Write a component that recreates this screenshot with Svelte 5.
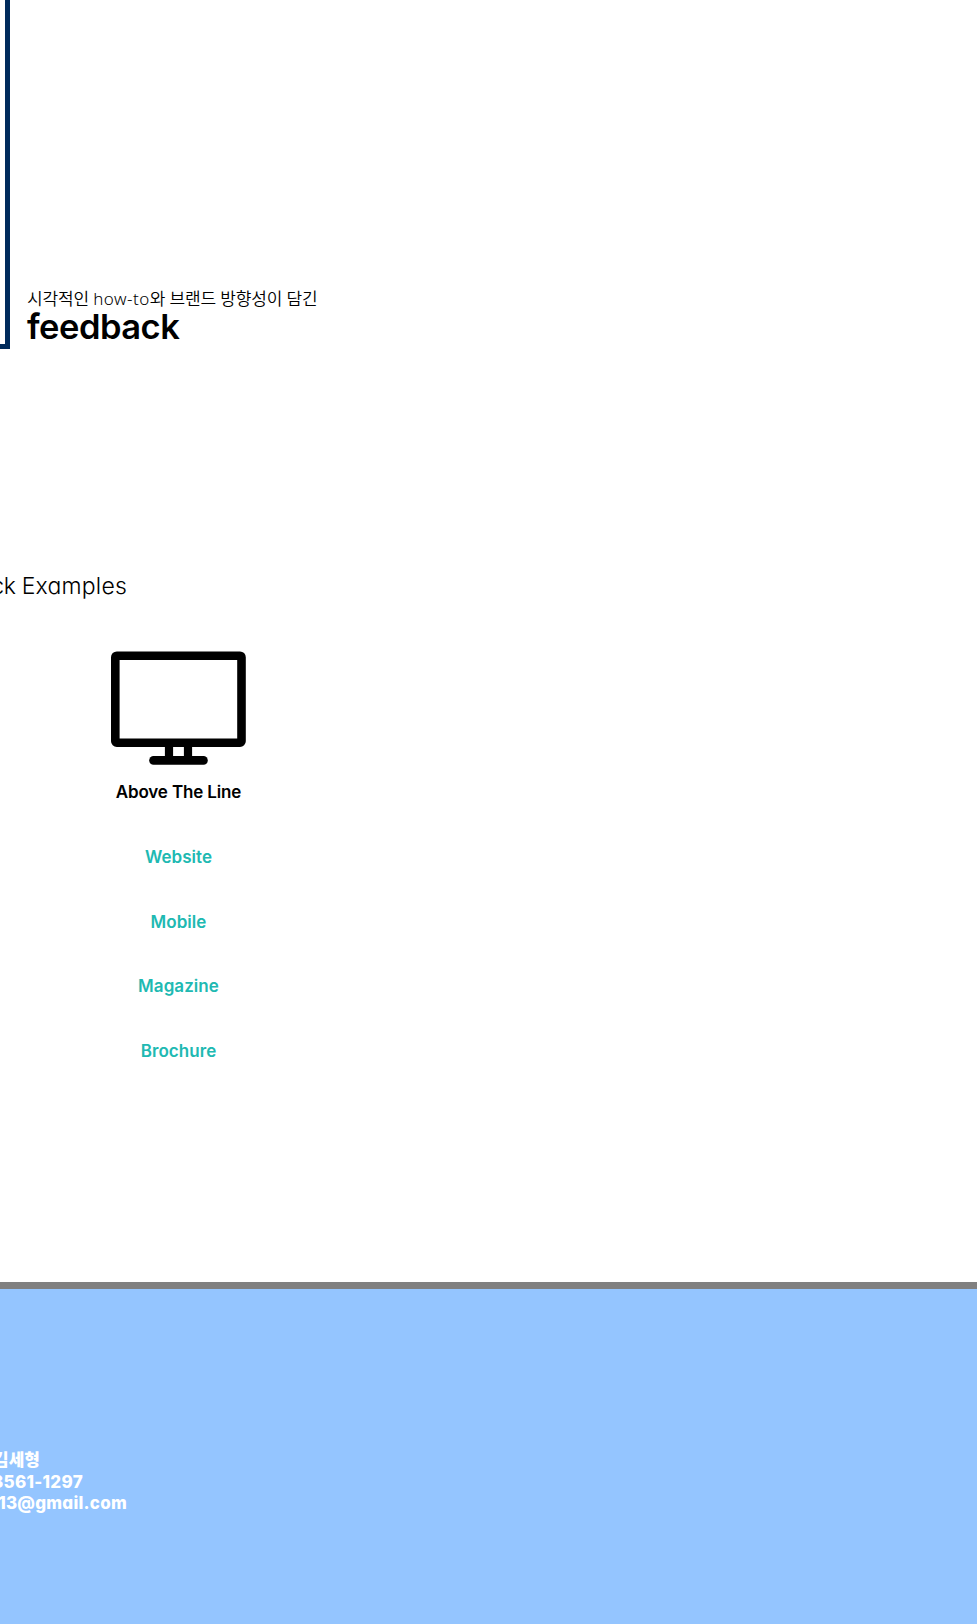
<script>
  const links = ['Website', 'Mobile', 'Magazine', 'Brochure'];
</script>

<main>
  <section class="intro">
    <div class="frame"></div>
    <div class="heading">
      <p>시각적인 <span class="latin">how-to</span>와 브랜드 방향성이 담긴</p>
      <h1>feedback</h1>
    </div>
  </section>

  <section class="examples">
    <h2><span class="clipped">ck</span><span>Examples</span></h2>
    <div class="column">
      <svg width="135" height="114" viewBox="0 0 135 114" aria-hidden="true">
        <rect x="4.3" y="4.7" width="126.2" height="87" rx="1.5" fill="none" stroke="#000" stroke-width="8.6" stroke-linejoin="round" />
        <path d="M58 92v18M77 92v18" stroke="#000" stroke-width="8.2" />
        <path d="M42.5 109.4h50" stroke="#000" stroke-width="8.6" stroke-linecap="round" />
      </svg>
      <h3><span>Above The Line</span></h3>
      <ul>
        {#each links as link}
          <li><span>{link}</span></li>
        {/each}
      </ul>
    </div>
  </section>

  <footer>
    <div class="name"><span>김세형</span></div>
    <div class="phone"><span>8561-1297</span></div>
    <div class="mail"><span>13@gmail.com</span></div>
  </footer>
</main>

<style>
  :global(body) { margin: 0; background: #fff; }
  main {
    width: 977px;
    height: 1624px;
    overflow: hidden;
    display: flex;
    flex-direction: column;
    color: #000;
    font-family: Inter, "Noto Sans CJK KR", sans-serif;
  }
  h1, h2, h3, p, ul { margin: 0; padding: 0; font-weight: inherit; }
  span { white-space: nowrap; }
  .intro { display: flex; height: 349px; flex: none; }
  .frame {
    box-sizing: border-box;
    width: 10px;
    border: solid #002b5c;
    border-width: 0 5px 5px 0;
  }
  .heading { padding: 287px 0 0 17px; white-space: nowrap; }
  .heading p {
    font: 350 17px/24px "Noto Sans", "Noto Sans CJK KR", sans-serif;
    letter-spacing: -0.16px;
  }
  .latin { letter-spacing: 0.5px; }
  h1 { font: 640 34.5px/36px Inter, sans-serif; letter-spacing: -0.5px; margin-top: -2px; }
  .examples { height: 933px; flex: none; }
  h2 {
    width: 127px;
    margin-top: 220px;
    display: flex;
    justify-content: flex-end;
    gap: 6px;
    font: 300 23px/34px Inter, sans-serif;
    letter-spacing: 0.2px;
    font-feature-settings: "cv11" 1;
  }
  .clipped { letter-spacing: -0.3px; }
  .column {
    width: 135px;
    margin: 48px 0 0 111px;
    display: flex;
    flex-direction: column;
    align-items: center;
  }
  svg { display: block; }
  h3, li { display: flex; justify-content: center; font: 600 17px/24px Inter, sans-serif; }
  h3 { margin-top: 15px; letter-spacing: -0.15px; }
  ul { list-style: none; margin-top: 41px; display: grid; gap: 40.5px; }
  li { color: #20b9b2; letter-spacing: 0.05px; }
  footer {
    box-sizing: border-box;
    flex: 1;
    border-top: 7px solid #808080;
    padding-top: 161px;
    background: #94c5ff;
    color: #fff;
    font: 800 17px/21.5px Inter, "Noto Sans CJK KR", sans-serif;
    font-feature-settings: "cv11" 1;
  }
  footer div { display: flex; justify-content: flex-end; }
  .name { width: 40px; }
  .phone { width: 83px; letter-spacing: 0.3px; }
  .mail { width: 127px; letter-spacing: 0.25px; }
</style>
